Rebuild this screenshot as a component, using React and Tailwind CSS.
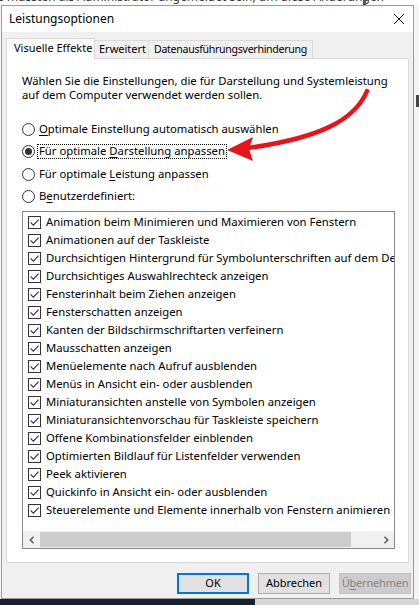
import React from "react";

const items = [
  "Animation beim Minimieren und Maximieren von Fenstern",
  "Animationen auf der Taskleiste",
  "Durchsichtigen Hintergrund für Symbolunterschriften auf dem Desktop",
  "Durchsichtiges Auswahlrechteck anzeigen",
  "Fensterinhalt beim Ziehen anzeigen",
  "Fensterschatten anzeigen",
  "Kanten der Bildschirmschriftarten verfeinern",
  "Mausschatten anzeigen",
  "Menüelemente nach Aufruf ausblenden",
  "Menüs in Ansicht ein- oder ausblenden",
  "Miniaturansichten anstelle von Symbolen anzeigen",
  "Miniaturansichtenvorschau für Taskleiste speichern",
  "Offene Kombinationsfelder einblenden",
  "Optimierten Bildlauf für Listenfelder verwenden",
  "Peek aktivieren",
  "Quickinfo in Ansicht ein- oder ausblenden",
  "Steuerelemente und Elemente innerhalb von Fenstern animieren",
];

function CheckBox() {
  return (
    <span className="w-[13px] h-[13px] border border-[#333333] bg-white flex items-center justify-center shrink-0">
      <svg width="11" height="11" viewBox="0 0 11 11">
        <path d="M1.6 5.4 L4.3 8.1 L9.6 2.6" fill="none" stroke="#333333" strokeWidth="1.1" />
      </svg>
    </span>
  );
}

function Radio({ checked }) {
  return (
    <span className="w-[13px] h-[13px] rounded-full border border-[#333333] bg-white flex items-center justify-center shrink-0">
      {checked && <span className="w-[7px] h-[7px] rounded-full bg-[#333333]" />}
    </span>
  );
}

function RadioRow({ checked, focused, h, children }) {
  return (
    <div className={"flex items-center " + h}>
      <Radio checked={checked} />
      <span
        className={
          "ml-[2px] px-[1px] h-[15px] flex items-center border whitespace-nowrap " +
          (focused ? "border-dotted border-[#000000]" : "border-transparent")
        }
      >
        {children}
      </span>
    </div>
  );
}

export default function App() {
  return (
    <div className="w-[419px] h-[605px] overflow-hidden bg-[#f7f7f7] flex flex-col font-['Noto_Sans',sans-serif] text-[11.3px] text-black relative">
      {/* background strip top */}
      <div className="h-[5px] overflow-hidden bg-white shrink-0 relative">
        <div className="mt-[-10px] ml-[-3px] text-[12px] leading-[14px] text-[#3a3a3a] whitespace-nowrap">
          e müssten als Administrator angemeldet sein, um diese Änderungen
        </div>
        <div className="absolute left-[363px] top-0 w-[3px] h-[5px] bg-[#555555]" />
      </div>

      <div className="flex flex-1 min-h-0">
        {/* dialog */}
        <div className="ml-[1px] w-[413px] border border-[#9a9a9a] bg-[#f0f0f0] flex flex-col">
          {/* title bar */}
          <div className="h-[26px] bg-white flex items-center justify-between pl-[7px] pr-[5px]">
            <span className="text-[12px]">Leistungsoptionen</span>
            <svg width="12" height="12" viewBox="0 0 12 12" className="mr-[3px]">
              <path d="M1 1 L11 11 M11 1 L1 11" stroke="#111111" strokeWidth="1" />
            </svg>
          </div>

          {/* body */}
          <div className="pl-[4px] pt-[6px]">
            {/* tabs */}
            <div className="flex items-end h-[20px] text-[11px]">
              <div className="relative z-10 w-[89px] h-[21px] -mb-[1px] bg-white border-l border-t border-r border-[#d9d9d9] flex items-center pl-[7px] pb-[1px] whitespace-nowrap">
                Visuelle Effekte
              </div>
              <div className="w-[54px] h-[18px] border-t border-r border-[#d9d9d9] bg-[#f0f0f0] flex items-center pl-[4px] whitespace-nowrap">
                Erweitert
              </div>
              <div className="w-[164px] h-[18px] border-t border-r border-[#d9d9d9] bg-[#f0f0f0] flex items-center pl-[5px] whitespace-nowrap">
                <span className="text-[10.6px] tracking-[-0.3px]">Datenausführungsverhinderung</span>
              </div>
            </div>

            {/* panel */}
            <div className="w-[403px] h-[505px] bg-white border border-[#d9d9d9] pl-[15px] pt-[15px] relative">
              <div className="leading-[14px] whitespace-nowrap">
                Wählen Sie die Einstellungen, die für Darstellung und Systemleistung
                <br />
                auf dem Computer verwendet werden sollen.
              </div>

              <div className="mt-[16px]">
                <RadioRow h="h-[22px]">
                  <span><u className="underline-offset-[2px]">O</u>ptimale Einstellung automatisch auswählen</span>
                </RadioRow>
                <RadioRow h="h-[23px]" checked focused>
                  <span>Für optimale <u className="underline-offset-[2px]">D</u>arstellung anpassen</span>
                </RadioRow>
                <RadioRow h="h-[22px]">
                  <span>Für optimale <u className="underline-offset-[2px]">L</u>eistung anpassen</span>
                </RadioRow>
                <RadioRow h="h-[22px]">
                  <span>B<u className="underline-offset-[2px]">e</u>nutzerdefiniert:</span>
                </RadioRow>
              </div>

              {/* list box */}
              <div className="mt-[4px] w-[373px] h-[338px] border border-[#828790] bg-white flex flex-col">
                <div className="pt-[1px] h-[319px] overflow-hidden">
                  {items.map((t) => (
                    <div key={t} className="h-[18px] flex items-center pl-[5px] whitespace-nowrap overflow-hidden">
                      <CheckBox />
                      <span className="ml-[5px]">{t}</span>
                    </div>
                  ))}
                </div>
                <div className="h-[17px] mt-auto bg-[#f0f0f0] flex items-center">
                  <div className="w-[17px] h-[17px] flex items-center justify-center">
                    <svg width="8" height="8" viewBox="0 0 8 8">
                      <path d="M5.5 0.8 L2.3 4 L5.5 7.2" fill="none" stroke="#606060" strokeWidth="1.6" />
                    </svg>
                  </div>
                  <div className="w-[311px] h-[15px] bg-[#cdcdcd]" />
                  <div className="flex-1" />
                  <div className="w-[17px] h-[17px] flex items-center justify-center">
                    <svg width="8" height="8" viewBox="0 0 8 8">
                      <path d="M2.5 0.8 L5.7 4 L2.5 7.2" fill="none" stroke="#606060" strokeWidth="1.6" />
                    </svg>
                  </div>
                </div>
              </div>
            </div>

            {/* buttons */}
            <div className="flex justify-end gap-[9px] pr-[2px] mt-[10px] text-[11px]">
              <button className="w-[72px] h-[21px] bg-[#e1e1e1] border-2 border-[#0078d7] flex items-center justify-center">
                OK
              </button>
              <button className="w-[72px] h-[21px] bg-[#e1e1e1] border border-[#adadad] flex items-center justify-center">
                Abbrechen
              </button>
              <button className="w-[72px] h-[21px] bg-[#cccccc] border border-[#bfbfbf] flex items-center justify-center text-[#838383] whitespace-nowrap">
                <span className="tracking-[-0.2px]">Ü<u className="underline-offset-[2px]">b</u>ernehmen</span>
              </button>
            </div>
          </div>
        </div>
        {/* right background */}
        <div className="flex-1 bg-[#f4f4f4] relative">
          <div className="absolute left-[2px] top-[90px] w-[3px] h-[12px] bg-[#444444]" />
        </div>
      </div>

      {/* bottom strip */}
      <div className="h-[6px] shrink-0 flex">
        <div className="w-[255px] bg-[#17212e]" />
        <div className="flex-1 bg-[#d6d6d6]" />
      </div>

      {/* red arrow */}
      <svg className="absolute left-0 top-0 pointer-events-none" width="419" height="605" viewBox="0 0 419 605">
        <path d="M367 91 C 355 120, 320 138, 248 148" fill="none" stroke="#e8141c" strokeWidth="4.5" strokeLinecap="round" />
        <path d="M227 150 L253 137 L249 149 L253 161 Z" fill="#e8141c" />
      </svg>
    </div>
  );
}
